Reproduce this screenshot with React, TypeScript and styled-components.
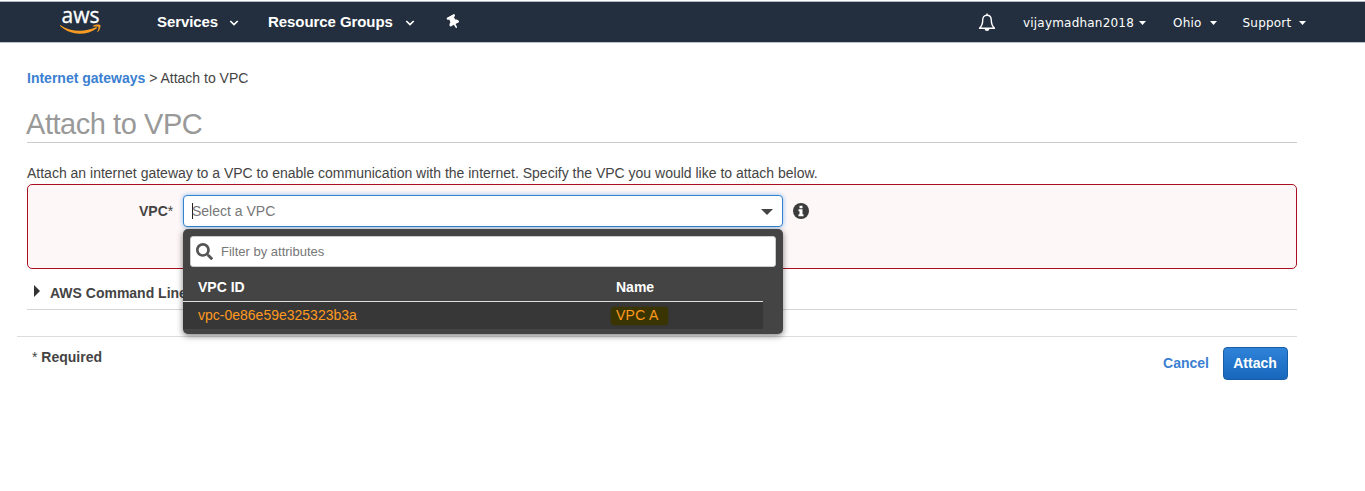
import React from 'react';
import styled, { createGlobalStyle } from 'styled-components';
import { FaThumbtack, FaSearch } from 'react-icons/fa';

const GlobalStyle = createGlobalStyle`
  * { box-sizing: border-box; }
  body {
    margin: 0;
    background: #fff;
    color: #444;
    font: 14px/16px "Liberation Sans", Arial, sans-serif;
    overflow: hidden;
  }
`;

const NavBar = styled.header`
  display: flex;
  align-items: flex-start;
  height: 42px;
  margin-top: 1px;
  border-top: 1px solid #b4bac2;
  border-bottom: 1px solid #b9c3cf;
  background: #232f3e;
  color: #fff;
`;

const LogoLink = styled.a`
  display: block;
  width: 42px;
  height: 34px;
  margin: 0 0 0 60px;
`;

const Logo = styled.svg`
  display: block;
  overflow: visible;
`;

const LogoText = styled.text`
  font: 21.5px "Open Sans", "Noto Sans", sans-serif;
  fill: #fff;
  stroke: #fff;
  stroke-width: 0.3;
`;

const MenuItem = styled.a<{ $left: number; $gap: number }>`
  display: flex;
  align-items: center;
  gap: ${p => p.$gap}px;
  height: 40px;
  margin-left: ${p => p.$left}px;
  white-space: nowrap;
`;

const PrimaryItem = styled(MenuItem)`
  font-size: 15px;
  font-weight: bold;
  letter-spacing: -0.08px;
`;

const AccountItem = styled(MenuItem)`
  font: 12px/16px "DejaVu Sans", Verdana, sans-serif;
  letter-spacing: 0.2px;
  padding-top: 1px;
`;

const Pin = styled(FaThumbtack)`
  width: 11px;
  height: 14px;
  margin: 13px 0 0 33px;
  transform: rotate(-28deg);
`;

const Bell = styled.svg`
  width: 18px;
  height: 20px;
  margin: 11px 27px 0 auto;
`;

const AccountMenu = styled.nav`
  display: flex;
  width: 342px;
`;

const Page = styled.main`
  padding: 27px 68px 0 27px;
`;

const Breadcrumb = styled.div`
  height: 16px;
`;

const Link = styled.a`
  color: #3b7fd1;
  font-weight: bold;
`;

const Title = styled.h1`
  height: 47px;
  margin: 10px 0 0;
  padding-top: 11px;
  border-bottom: 1px solid #ccc;
  color: #999;
  font-size: 29px;
  font-weight: normal;
  letter-spacing: -0.45px;
  line-height: 34px;
  text-indent: -1px;
`;

const Intro = styled.p`
  margin: 22px 0 3px;
`;

const ErrorPanel = styled.section`
  display: flex;
  align-items: flex-start;
  height: 85px;
  padding: 10px 0 0 111px;
  border: 1px solid #a90f20;
  border-radius: 5px;
  background: #fef7f7;
`;

const FieldLabel = styled.label`
  width: 44px;
  line-height: 32px;
  font-weight: bold;
`;

const Asterisk = styled.span`
  font-weight: normal;
`;

const SelectWrap = styled.div`
  position: relative;
  width: 600px;
`;

const SelectBox = styled.div`
  display: flex;
  align-items: center;
  height: 32px;
  padding: 0 9px 0 8px;
  border: 1px solid #3583cd;
  border-radius: 4px;
  background: #fff;
  box-shadow: 0 0 5px #8bbcf0;
  color: #777;
`;

const Caret = styled.i`
  width: 1px;
  height: 16px;
  margin-right: -1px;
  background: #222;
`;

const SelectArrow = styled.i`
  margin: 2px 0 0 auto;
  border: 6px solid transparent;
  border-top-color: #444;
  border-bottom: 0;
`;

const InfoIcon = styled.svg`
  width: 16px;
  height: 16px;
  margin: 8px 0 0 10px;
`;

const Dropdown = styled.div`
  position: absolute;
  z-index: 2;
  top: 34px;
  left: 0;
  width: 600px;
  height: 105px;
  padding: 7px;
  border-radius: 5px;
  background: #444;
  box-shadow: 0 2px 6px rgba(0, 0, 0, 0.5);
`;

const Filter = styled.div`
  display: flex;
  align-items: center;
  gap: 8px;
  height: 31px;
  padding-left: 5px;
  border: 1px solid #ccc;
  border-radius: 3px;
  background: #fff;
  color: #777;
  font-size: 13px;
`;

const SearchIcon = styled(FaSearch)`
  width: 17px;
  height: 17px;
  color: #555;
`;

const Row = styled.div`
  display: grid;
  grid-template-columns: 418px 1fr;
  width: 580px;
  height: 27px;
  margin-left: -7px;
  padding-left: 15px;
  background: #373737;
  color: #ff9a1f;
  line-height: 26px;
`;

const HeaderRow = styled(Row)`
  height: 35px;
  padding-top: 7px;
  border-bottom: 1px solid #ddd;
  background: none;
  color: #fff;
  font-weight: bold;
`;

const Marked = styled.span`
  justify-self: start;
  height: 18px;
  margin: 5px 0 0 -5px;
  padding: 0 9px 0 5px;
  border-radius: 4px;
  background: #3a3500;
  box-shadow: 0 0 2px #3a3500;
  letter-spacing: 0.25px;
  line-height: 16px;
`;

const CommandLine = styled.section`
  display: flex;
  height: 41px;
  padding: 16px 0 0 7px;
  border-bottom: 1px solid #d5d5d5;
  font-weight: bold;
`;

const Disclosure = styled.i`
  align-self: flex-start;
  margin: 0 10px 0 0;
  border: 6px solid transparent;
  border-left-color: #333;
  border-right: 0;
`;

const Footer = styled.footer`
  display: flex;
  align-items: flex-start;
  margin: 26px 0 0 -10px;
  padding: 10px 9px 0 15px;
  border-top: 1px solid #ddd;
  font-weight: bold;
`;

const Required = styled.span`
  flex: 1;
  padding-top: 2px;
`;

const Cancel = styled(Link)`
  margin: 8px 14px 0 0;
`;

const AttachButton = styled.button`
  width: 65px;
  height: 33px;
  padding: 0 1px 2px 0;
  border: 1px solid #175ca6;
  border-radius: 4px;
  background: linear-gradient(#2f83d8, #1767bd);
  color: #fff;
  font: bold 14px "Liberation Sans", Arial, sans-serif;
`;

const ChevronIcon = styled.svg`
  margin-top: 2px;
`;

const Chevron = () => (
  <ChevronIcon width="10" height="6" viewBox="0 0 10 6">
    <path d="M1.3 1 5 4.6 8.7 1" fill="none" stroke="#fff" strokeWidth="1.7" />
  </ChevronIcon>
);

const SmallArrow = () => (
  <svg width="7" height="4" viewBox="0 0 7 4">
    <path d="M0 0h7L3.5 4z" fill="#fff" />
  </svg>
);

export default function App() {
  return (
    <>
      <GlobalStyle />
      <NavBar>
        <LogoLink>
          <Logo width="42" height="34" viewBox="0 0 42 34">
            <LogoText x="1.5" y="20.5" textLength="38" lengthAdjust="spacingAndGlyphs">aws</LogoText>
            <path d="M.5 23.2C11 30 24.5 30.3 35.8 25.2c.9-.4 1.6.6.8 1.2C26.5 34 10 33.6.2 24.1c-.5-.6-.2-1.200.3-.9z" fill="#f79b22" />
            <path d="M32.8 23.9c2-1.400 6.800-1.700 7.500-.8.700.9-.3 5-2.400 6.900-.4.300-.8.100-.6-.3.600-1.400 1.600-4.200 1.100-4.900-.5-.6-3.700-.4-5.200-.2-.5.100-.7-.4-.4-.7z" fill="#f79b22" />
          </Logo>
        </LogoLink>
        <PrimaryItem $left={55} $gap={11}>Services <Chevron /></PrimaryItem>
        <PrimaryItem $left={29} $gap={12}>Resource Groups <Chevron /></PrimaryItem>
        <Pin />
        <Bell viewBox="0 0 18 20" fill="none" stroke="#fff" strokeWidth="1.4">
          <path d="M9 2.200C5.900 2.200 4.700 4.500 4.700 7.300c0 3.900-.9 5.800-3.200 8h15c-2.300-2.200-3.200-4.100-3.200-8 0-2.800-1.200-5.100-4.300-5.100z" strokeLinejoin="round" />
          <path d="M9 .5v1.700" />
          <path d="M6.700 16a2.300 2.100 0 0 0 4.600 0z" fill="#fff" stroke="none" />
        </Bell>
        <AccountMenu>
          <AccountItem $left={0} $gap={5}>vijaymadhan2018 <SmallArrow /></AccountItem>
          <AccountItem $left={27} $gap={8}>Ohio <SmallArrow /></AccountItem>
          <AccountItem $left={26} $gap={8}>Support <SmallArrow /></AccountItem>
        </AccountMenu>
      </NavBar>
      <Page>
        <Breadcrumb><Link>Internet gateways</Link> &gt; Attach to VPC</Breadcrumb>
        <Title>Attach to VPC</Title>
        <Intro>
          Attach an internet gateway to a VPC to enable communication with the internet. Specify the VPC you would like to attach below.
        </Intro>
        <ErrorPanel>
          <FieldLabel>VPC<Asterisk>*</Asterisk></FieldLabel>
          <SelectWrap>
            <SelectBox><Caret />Select a VPC<SelectArrow /></SelectBox>
            <Dropdown>
              <Filter><SearchIcon />Filter by attributes</Filter>
              <HeaderRow><span>VPC ID</span><span>Name</span></HeaderRow>
              <Row><span>vpc-0e86e59e325323b3a</span><Marked>VPC A</Marked></Row>
            </Dropdown>
          </SelectWrap>
          <InfoIcon viewBox="0 0 16 16">
            <circle cx="8" cy="8" r="8" fill="#3b3b3b" />
            <path d="M6.500 2.700h3v2.600h-3zM5.500 6.300h4v5h1v2h-5v-2h1v-3h-1z" fill="#fff" />
          </InfoIcon>
        </ErrorPanel>
        <CommandLine><Disclosure />AWS Command Line</CommandLine>
        <Footer>
          <Required><Asterisk>*</Asterisk> Required</Required>
          <Cancel>Cancel</Cancel>
          <AttachButton>Attach</AttachButton>
        </Footer>
      </Page>
    </>
  );
}
